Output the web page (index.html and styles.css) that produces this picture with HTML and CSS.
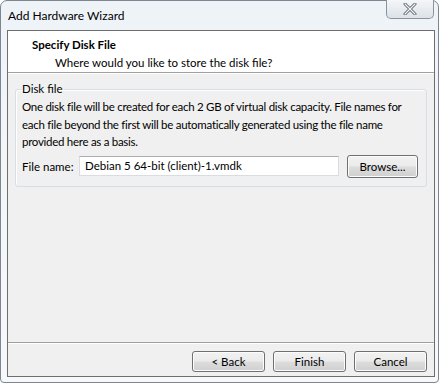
FILE: index.html
```html
<!DOCTYPE html>
<html>
<head>
<meta charset="utf-8">
<link rel="stylesheet" href="styles.css">
</head>
<body>
<div class="window">
  <div class="titlebar">
    <span class="title">Add Hardware Wizard</span>
    <button class="close" aria-label="Close">
      <svg width="14" height="12" viewBox="0 0 14 12"><path d="M2 1 L12 11 M12 1 L2 11" stroke="#5a6470" stroke-width="3" stroke-linecap="round"/><path d="M2 1 L12 11 M12 1 L2 11" stroke="#f4f6f8" stroke-width="1.2" stroke-linecap="round"/></svg>
    </button>
  </div>
  <div class="client">
    <div class="header">
      <div class="heading">Specify Disk File</div>
      <div class="subheading">Where would you like to store the disk file?</div>
    </div>
    <div class="body">
      <fieldset class="group">
        <legend>Disk file</legend>
        <p class="desc">One disk file will be created for each 2 GB of virtual disk capacity. File names for<br>each file beyond the first will be automatically generated using the file name<br>provided here as a basis.</p>
        <div class="row">
          <label class="label">File name:</label>
          <div class="input">Debian 5 64-bit (client)-1.vmdk</div>
          <button class="btn browse">Browse...</button>
        </div>
      </fieldset>
    </div>
    <div class="footer">
      <button class="btn">&lt; Back</button>
      <button class="btn">Finish</button>
      <button class="btn">Cancel</button>
    </div>
  </div>
</div>
</body>
</html>
```
FILE: styles.css
```css
html, body {
  margin: 0;
  padding: 0;
  background: #ffffff;
}
body {
  width: 442px;
  height: 385px;
  font-family: Lato, "Liberation Sans", sans-serif;
  font-size: 11.5px;
  color: #000;
}
.window {
  box-sizing: border-box;
  width: 439px;
  height: 383px;
  border: 1px solid #7c8590;
  border-radius: 7px 7px 4px 4px;
  background: linear-gradient(180deg, #eef3f8 0%, #f3f6f9 40%, #f6f8fa 100%);
  display: flex;
  flex-direction: column;
  padding: 0 3px 5px 6px;
}
.titlebar {
  height: 29px;
  display: flex;
  justify-content: space-between;
  align-items: flex-start;
  flex: none;
}
.title {
  margin-top: 7px;
  margin-left: 1px;
  font-size: 12px;
}
.close {
  width: 48px;
  height: 19px;
  margin-top: -1px;
  margin-right: 1px;
  padding: 0;
  border: 1px solid #8c939c;
  border-top: none;
  border-radius: 0 0 5px 5px;
  background: linear-gradient(180deg, #f4f6f8 0%, #e8ecf0 50%, #dde2e8 100%);
  display: flex;
  align-items: center;
  justify-content: center;
}
.client {
  flex: 1;
  border: 1px solid #6e6e6e;
  display: flex;
  flex-direction: column;
  background: #f0f0f0;
}
.header {
  background: #ffffff;
  height: 42px;
  border-bottom: 1px solid #a0a0a0;
  padding: 6px 0 0 24px;
  box-sizing: border-box;
  flex: none;
}
.heading {
  font-weight: bold;
  line-height: 16px;
}
.subheading {
  margin-top: 1px;
  padding-left: 23px;
  line-height: 17px;
}
.body {
  flex: 1;
  padding: 8px 7px 0 7px;
  border-top: 1px solid #ffffff;
}
.group {
  margin: 0;
  border: 1px solid #d5dfe5;
  border-radius: 3px;
  padding: 0 6px 8px 6px;
  box-shadow: inset 1px 1px 0 #fff;
}
.group legend {
  padding: 0 1px;
  margin-left: -1px;
  line-height: 14px;
}
.desc {
  margin: 2px 0 0 0;
  line-height: 17.5px;
  white-space: nowrap;
  letter-spacing: -0.28px;
}
.row {
  display: flex;
  align-items: center;
  margin-top: 4px;
}
.label {
  width: 57px;
  white-space: nowrap;
}
.input {
  box-sizing: border-box;
  width: 260px;
  height: 20px;
  border: 1px solid #d9dde2;
  border-top-color: #abadb3;
  background: #fff;
  padding: 1px 5px;
  line-height: 16px;
  white-space: nowrap;
}
.btn {
  font-family: Lato, "Liberation Sans", sans-serif;
  font-size: 11.5px;
  color: #000;
  box-sizing: border-box;
  width: 73px;
  height: 21px;
  padding: 0;
  border: 1px solid #707070;
  border-radius: 3px;
  background: linear-gradient(180deg, #f2f2f2 0%, #ebebeb 48%, #dddddd 52%, #cfcfcf 100%);
  box-shadow: inset 0 0 0 1px #fcfcfc;
}
.browse {
  width: 71px;
  height: 23px;
  margin-left: 8px;
}
.footer {
  flex: none;
  height: 34px;
  border-top: 1px solid #a0a0a0;
  box-shadow: inset 0 1px 0 #ffffff;
  display: flex;
  justify-content: flex-end;
  align-items: flex-start;
  gap: 8px;
  padding: 8px 7px 0 0;
  box-sizing: border-box;
}
```
